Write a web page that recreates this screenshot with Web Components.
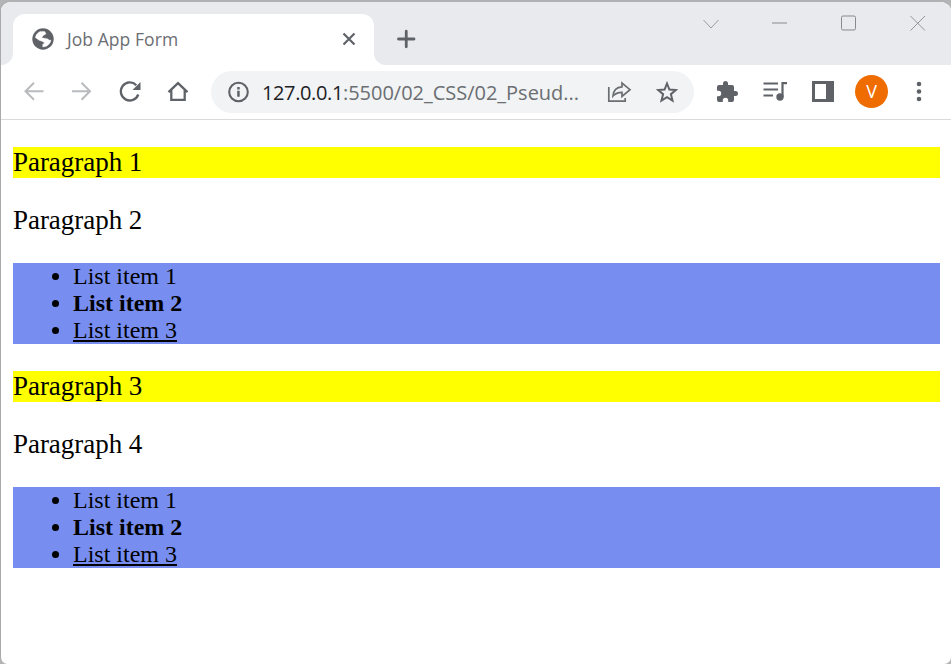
<!DOCTYPE html>
<html lang="en"><head><meta charset="utf-8"><title>Job App Form</title>
<style>
html,body{margin:0;height:100%;overflow:hidden;background:#b4b4b6}
</style></head><body>
<browser-window>
  <tab-strip slot="tabs"><browser-tab>Job App Form</browser-tab></tab-strip>
  <nav-toolbar slot="toolbar"><address-bar><span slot="host">127.0.0.1</span><span slot="path">:5500/02_CSS/02_Pseud...</span></address-bar></nav-toolbar>
  <page-paragraph marked>Paragraph 1</page-paragraph>
  <page-paragraph>Paragraph 2</page-paragraph>
  <page-list></page-list>
  <page-paragraph marked>Paragraph 3</page-paragraph>
  <page-paragraph>Paragraph 4</page-paragraph>
  <page-list></page-list>
</browser-window>
<script>
const define=(name,html)=>customElements.define(name,class extends HTMLElement{
  constructor(){super();this.attachShadow({mode:'open'}).innerHTML=html;}
});

define('browser-window',`<style>
:host{display:flex;flex-direction:column;box-sizing:border-box;height:664px;width:951px;border-left:1px solid #a9a9ab;border-top:2px solid #b1b1b3;border-radius:11px 11px 7px 7px;background:#fff;overflow:hidden}
main{flex:1;padding:27px 11px 0 12px;display:flex;flex-direction:column;gap:27px}
</style><slot name="tabs"></slot><slot name="toolbar"></slot><main><slot></slot></main>`);

define('tab-strip',`<style>
:host{display:flex;height:63px;flex:none;background:#fff}
.lead{width:12px;background:#e8eaed;border-bottom-right-radius:12px}
.tab{width:361px;padding-top:12px;box-sizing:border-box;background:#e8eaed}
.rest{flex:1;display:flex;background:#e8eaed;border-bottom-left-radius:12px}
.plus{margin:27px 0 0 21.500px}
.win{margin-left:auto;display:flex;gap:44px;padding:8.500px 21px 0 0;height:24px}
svg{display:block;fill:none}
</style><div class="lead"></div><div class="tab"><slot></slot></div>
<div class="rest"><svg class="plus" width="21" height="20" viewBox="0 0 21 20"><path d="M2.500 10h15.500M10.250 2.250v15.500" stroke="#5f6368" stroke-width="2.800" stroke-linecap="round"/></svg>
<div class="win">
<svg width="25" height="24" viewBox="0 0 25 24"><path d="M5.500 9l7.500 8L20.500 9" stroke="#999a9d"/></svg>
<svg width="25" height="24" viewBox="0 0 25 24"><path d="M5 12h15" stroke="#88898b"/></svg>
<svg width="25" height="24" viewBox="0 0 25 24"><rect x="5.500" y="5" width="14" height="14" rx="1.500" stroke="#88898b"/></svg>
<svg width="25" height="24" viewBox="0 0 25 24"><path d="M5.500 5L20 19.500M20 5L5.500 19.500" stroke="#939496"/></svg>
</div></div>`);

define('browser-tab',`<style>
:host{display:flex;align-items:center;box-sizing:border-box;height:51px;padding:0 18px 2px 18px;background:#fff;border-radius:12px 12px 0 0;font:17.500px/24px "Open Sans","Noto Sans",sans-serif;color:#6b6e72}
span{margin-left:12px;letter-spacing:.06px}svg{display:block}.close{margin-left:auto}
</style><svg width="24" height="24" viewBox="0 0 24 24"><circle cx="12" cy="12" r="10.700" fill="#5f6368"/><path d="M5 8.300Q6.500 5.700 9 4.500L13.800 4.600 15 6.900 12.400 8.400 10.700 10.700 16.300 11.700 18.300 13 20 13.200Q19.300 17.300 15 19.500L11.700 20V17.300L13.700 16 11.500 14.500 8 13.300 4.300 10.500z" fill="#fff" stroke="#fff" stroke-width=".3" stroke-linejoin="round"/></svg>
<span><slot></slot></span><svg class="close" width="14" height="14" viewBox="0 0 14 14"><path d="M1.500 1.500l11 11M12.500 1.500l-11 11" stroke="#5f6368" stroke-width="2.200"/></svg>`);

define('nav-toolbar',`<style>
:host{display:flex;align-items:center;box-sizing:border-box;height:55px;flex:none;padding:0 20px 0 21px;border-bottom:1px solid #d9dadc;background:#fff;font-family:"Open Sans","Noto Sans",sans-serif}
svg{display:block;flex:none}
.nav,.tools{display:flex;align-items:center;gap:24px}
.nav{margin-right:21px}.tools{margin-left:21px;flex:1}
.queue{margin-right:-1px}
.avatar{width:33px;height:33px;border-radius:50%;background:#ef6c00;color:#fff;font-size:18px;line-height:32px;text-align:center;margin:-1px -5px 0 -4px}
</style>
<div class="nav">
<svg width="24" height="24" viewBox="0 0 24 24" fill="none" stroke="#b9bbbe" stroke-width="2"><path d="M21.500 11.300H3.500M12 2.800L3.500 11.300l8.500 8.500"/></svg>
<svg width="24" height="24" viewBox="0 0 24 24" fill="none" stroke="#b9bbbe" stroke-width="2"><path d="M2 11.300H20M11.500 2.800l8.500 8.500-8.500 8.500"/></svg>
<svg width="24" height="24" viewBox="0 0 24 24"><path d="M20.300 14.500a9 9 0 1 1-2-9.300" fill="none" stroke="#5f6368" stroke-width="2.300"/><path d="M22.500 2v8h-8z" fill="#5f6368"/></svg>
<svg width="24" height="24" viewBox="0 0 24 24" fill="none" stroke="#5f6368" stroke-width="2.300"><path d="M2.500 12.200L12 3.200l9.500 9M5.300 10.200v9.700h13.400v-9.700"/></svg>
</div><slot></slot>
<div class="tools">
<svg width="24" height="24" viewBox="0 0 24 24" fill="#5f6368"><path d="M20.500 11H19V7a2 2 0 0 0-2-2h-4V3.500a2.500 2.500 0 0 0-5 0V5H4a2 2 0 0 0-1.990 2v3.800H3.500a2.700 2.700 0 0 1 0 5.400H2V20a2 2 0 0 0 2 2h3.800v-1.500a2.700 2.700 0 0 1 5.400 0V22H17a2 2 0 0 0 2-2v-4h1.500a2.500 2.500 0 0 0 0-5z"/></svg>
<svg class="queue" width="25" height="24" viewBox="0 0 25 24"><path d="M.500 3.500h14.500M.500 9.500h14.500M.500 15.500h9.500M19.500 17V3.200h4.500" fill="none" stroke="#5f6368" stroke-width="2.200"/><circle cx="17" cy="17" r="3.700" fill="#5f6368"/></svg>
<svg width="24" height="24" viewBox="0 0 24 24"><path fill-rule="evenodd" d="M1 1h22v21H1zM4 4v15h11V4z" fill="#5f6368"/></svg>
<div class="avatar">V</div>
<svg width="24" height="24" viewBox="0 0 24 24" fill="#5f6368"><circle cx="12" cy="4" r="2.300"/><circle cx="12" cy="11.500" r="2.300"/><circle cx="12" cy="19" r="2.300"/></svg>
</div>`);

define('address-bar',`<style>
:host{display:flex;align-items:center;box-sizing:border-box;width:483px;height:42px;flex:none;padding:1px 15px 0 16px;margin-top:-1px;border-radius:21px;background:#f1f3f4;font-size:20px;line-height:28px;color:#6b6e72}
svg{display:block;flex:none}.url{margin-left:12px;padding-top:1px;white-space:nowrap;letter-spacing:-.02px;flex:1}.host{color:#202124;letter-spacing:-.38px}.share{margin-right:23px}
</style>
<svg width="23" height="24" viewBox="0 0 23 24"><circle cx="11.500" cy="12" r="9.300" fill="none" stroke="#5f6368" stroke-width="2.100"/><path d="M10.200 10.700h2.500v6h-2.500zM10.200 7h2.500v2.400h-2.500z" fill="#5f6368"/></svg>
<span class="url"><span class="host"><slot name="host"></slot></span><slot name="path"></slot></span>
<svg class="share" width="25" height="24" viewBox="0 0 25 24" fill="none" stroke="#6b6e72" stroke-width="1.700"><path d="M1.800 7v14.200h16.400V18M6 16c.5-6.500 4.200-9 9-9.200V3l8 6.700-8 6.700v-4c-4.200.1-6.800 1-9 3.600z"/></svg>
<svg width="24" height="24" viewBox="0 0 24 24" fill="none" stroke="#5f6368" stroke-width="2"><path d="M12 3.500l2.400 6 6.400.5-4.900 4.200 1.600 6.300L12 17.100l-5.500 3.400 1.600-6.300L3.200 10l6.400-.5z"/></svg>`);

define('page-paragraph',`<style>
:host{display:block;height:31px;font:27px/31px "Liberation Serif","Times New Roman",serif;letter-spacing:-.04px;color:#000}
:host([marked]){background:#ff0}
</style><slot></slot>`);

define('page-list',`<style>
:host{display:block;background:#778ef0;font:24px/27px "Liberation Serif","Times New Roman",serif;color:#000}
ul{margin:0;padding:0 0 0 60px}li:nth-child(2){font-weight:bold}li:nth-child(3){text-decoration:underline}
</style><ul><li>List item 1</li><li>List item 2</li><li>List item 3</li></ul>`);
</script></body></html>
